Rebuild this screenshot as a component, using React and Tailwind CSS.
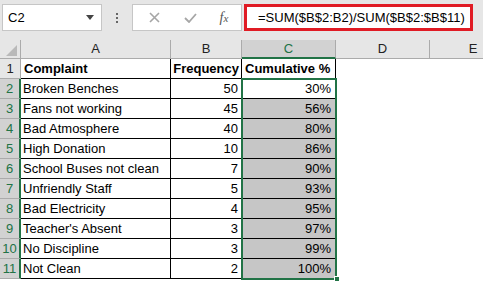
import React from 'react'

const rows = [
  ['Broken Benches', 50, '30%'],
  ['Fans not working', 45, '56%'],
  ['Bad Atmosphere', 40, '80%'],
  ['High Donation', 10, '86%'],
  ['School Buses not clean', 7, '90%'],
  ['Unfriendly Staff', 5, '93%'],
  ['Bad Electricity', 4, '95%'],
  ["Teacher's Absent", 3, '97%'],
  ['No Discipline', 3, '99%'],
  ['Not Clean', 2, '100%'],
]

function Toolbar() {
  return (
    <div className="flex h-[40px] items-start bg-[#e6e6e6] pt-[4px] pl-[2px]">
      {/* name box */}
      <div className="flex h-[27px] w-[100px] items-center justify-between border border-[#c6c6c6] bg-white pl-[5px] pr-[7px]">
        <span className="text-[13px] text-black">C2</span>
        <svg width="8" height="5" viewBox="0 0 8 5">
          <path d="M0 0h8L4 5z" fill="#444" />
        </svg>
      </div>
      <div className="flex h-[27px] w-[30px] flex-col items-center justify-center gap-[2px]">
        <div className="h-[2px] w-[2px] bg-[#666]" />
        <div className="h-[2px] w-[2px] bg-[#666]" />
        <div className="h-[2px] w-[2px] bg-[#666]" />
      </div>
      {/* cancel / enter / fx */}
      <div className="flex h-[27px] w-[110px] items-center border border-[#c6c6c6] bg-white">
        <div className="flex w-[40px] justify-center pl-[2px]">
          <svg width="11" height="11" viewBox="0 0 11 11">
            <path d="M1 1l9 9M10 1l-9 9" stroke="#a6a6a6" strokeWidth="1.6" />
          </svg>
        </div>
        <div className="flex w-[34px] justify-center">
          <svg width="13" height="10" viewBox="0 0 13 10">
            <path d="M1 5l4 4 7-8" stroke="#a6a6a6" strokeWidth="1.8" fill="none" />
          </svg>
        </div>
        <div className="flex w-[34px] justify-center">
          <span className="text-[14px] italic text-[#555] font-['Liberation_Serif',serif]">
            f<span className="text-[11px]">x</span>
          </span>
        </div>
      </div>
      <div className="ml-[2px] flex h-[27px] w-[229px] items-center border-[3px] border-[#e01b24] bg-white pl-[11px]">
        <span className="text-[13px] text-black">=SUM($B$2:B2)/SUM($B$2:$B$11)</span>
      </div>
    </div>
  )
}

function HeaderRow() {
  return (
    <div className="flex h-[19px] bg-[#e6e6e6] text-[13px] text-[#222]">
      <div className="relative w-[21px] shrink-0 border-r border-b border-[#ababab]">
        <svg className="absolute right-[3px] bottom-[2px]" width="11" height="11" viewBox="0 0 11 11">
          <path d="M11 0v11H0z" fill="#b9b9b9" />
        </svg>
      </div>
      <div className="flex w-[150px] shrink-0 items-center justify-center border-r border-b border-[#ababab]">A</div>
      <div className="flex w-[71px] shrink-0 items-center justify-center border-r border-b border-[#ababab]">B</div>
      <div className="flex w-[94px] shrink-0 items-center justify-center border-r border-[#ababab] border-b-2 border-b-[#217346] bg-[#d2d2d2] text-[#217346]">C</div>
      <div className="flex w-[94px] shrink-0 items-center justify-center border-r border-b border-[#ababab]">D</div>
      <div className="flex w-[86px] shrink-0 items-center justify-center border-b border-[#ababab]">E</div>
    </div>
  )
}

export default function App() {
  return (
    <div className="h-[282px] w-[483px] overflow-hidden bg-white font-['Liberation_Sans',Arial,sans-serif]">
      <Toolbar />
      <HeaderRow />
      <div className="relative text-[13px] leading-[19px] text-black">
        <div className="flex h-[20px]">
          <div className="flex w-[21px] items-center justify-center border-r border-b border-[#ababab] bg-[#e6e6e6] text-[#222]">1</div>
          <div className="flex w-[150px] items-end border-r border-b border-black pl-[3px] font-bold">Complaint</div>
          <div className="flex w-[71px] items-end justify-end border-r border-b border-black pr-[2px] font-bold">Frequency</div>
          <div className="flex w-[94px] items-end border-r border-b border-black pl-[3px] font-bold">Cumulative %</div>
        </div>
        {rows.map(([name, freq, pct], i) => (
          <div key={name} className="flex h-[20px]">
            <div className="flex w-[21px] items-center justify-center border-r-2 border-r-[#217346] border-b border-b-[#ababab] bg-[#d2d2d2] text-[#217346]">
              {i + 2}
            </div>
            <div className="flex w-[150px] items-end border-r border-b border-black pl-[2px]">{name}</div>
            <div className="flex w-[71px] items-end justify-end border-r border-b border-black pr-[3px]">{freq}</div>
            <div className={`flex w-[94px] items-end justify-end border-r border-b border-black pr-[4px] ${i === 0 ? 'bg-white' : 'bg-[#c6c6c6]'}`}>
              {pct}
            </div>
          </div>
        ))}
        {/* selection outline C2:C11 */}
        <div className="pointer-events-none absolute left-[241px] top-[19px] h-[202px] w-[96px] border-2 border-[#217346]" />
        <div className="absolute left-[334px] top-[217px] h-[6px] w-[6px] border border-white bg-[#217346]" />
      </div>
    </div>
  )
}
